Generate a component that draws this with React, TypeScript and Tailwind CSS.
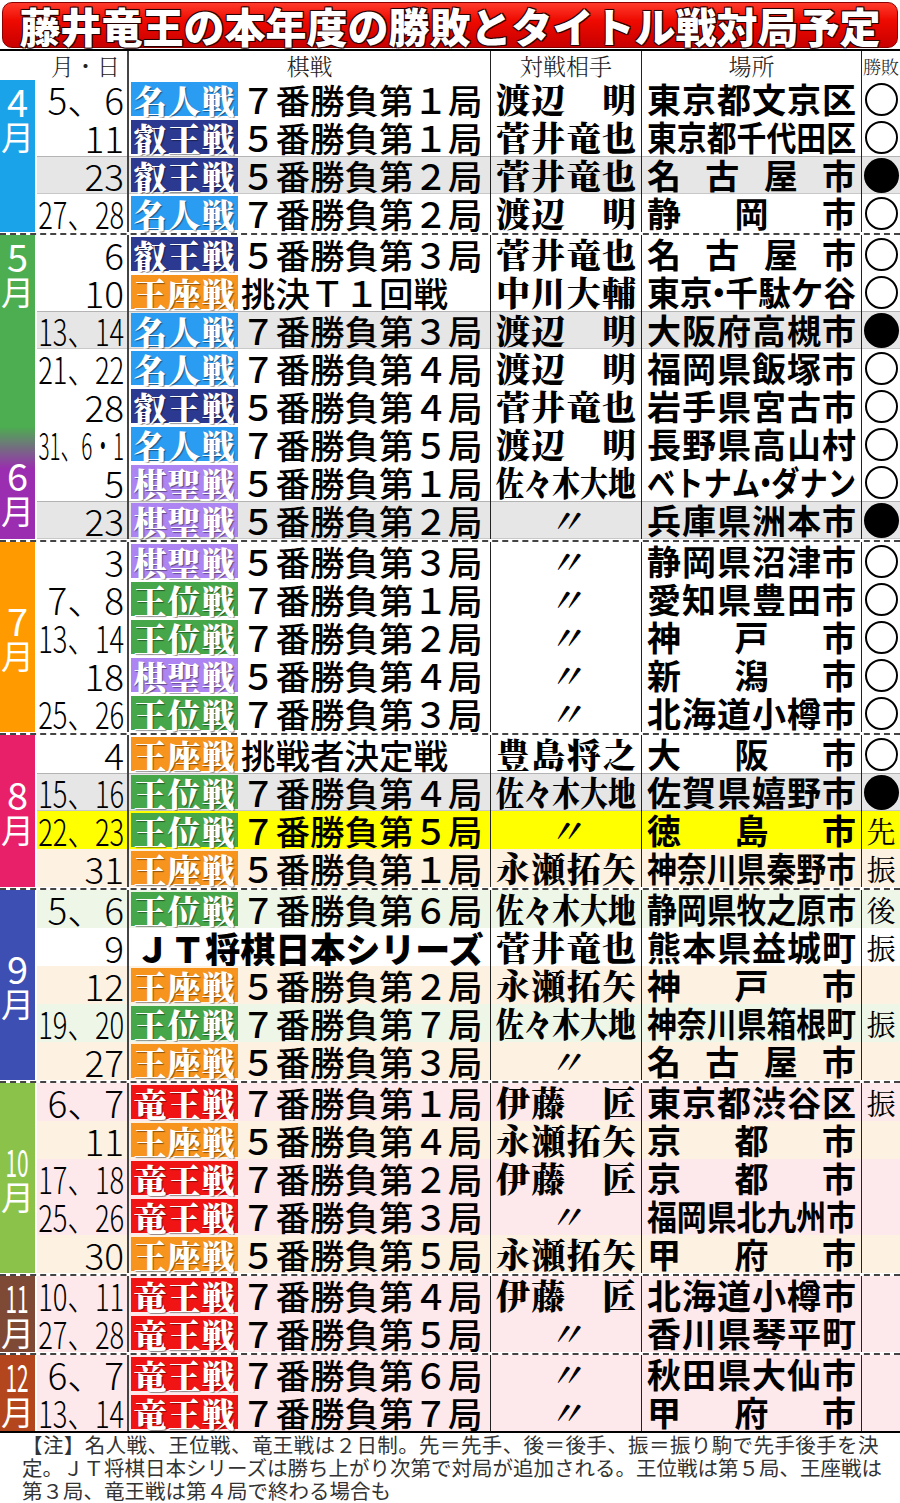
import type { ReactNode } from "react";

type Title = "meijin" | "eiou" | "ouza" | "kisei" | "oui" | "ryuou";
type Bg = "gray" | "yellow" | "cream" | "green" | "pink";

type Row = {
  d: string;
  t?: Title;
  m: string;
  o: string;
  p: string;
  r?: string;
  bg?: Bg;
};

const badges: Record<Title, { label: string; cls: string }> = {
  meijin: { label: "名人戦", cls: "bg-[#2a9cf2]" },
  eiou: { label: "叡王戦", cls: "bg-[#2b3990]" },
  ouza: { label: "王座戦", cls: "bg-[#f7941d]" },
  kisei: { label: "棋聖戦", cls: "bg-[#ad85f2]" },
  oui: { label: "王位戦", cls: "bg-[#46a64a]" },
  ryuou: { label: "竜王戦", cls: "bg-[#f01414]" },
};

const bgs: Record<Bg, string> = {
  gray: "bg-[#e6e6e6] shadow-[inset_0_1px_0_#b4b4b4,inset_0_-1px_0_#c8c8c8]",
  yellow: "bg-[#ffff00]",
  cream: "bg-[#fdf1e2]",
  green: "bg-[#eef6e8]",
  pink: "bg-[#fde9eb]",
};

const SERIF = "font-['Noto_Serif_CJK_JP','Noto_Sans_CJK_JP',serif]";

const groups: { block: string; labels: ReactNode; rows: Row[] }[] = [
  {
    block: "bg-[#1aa3e8] justify-start pt-[3px]",
    labels: <MonthLabel n="4" />,
    rows: [
      { d: "5、6", t: "meijin", m: "７番勝負第１局", o: "渡辺　明", p: "東京都文京区", r: "○" },
      { d: "11", t: "eiou", m: "５番勝負第１局", o: "菅井竜也", p: "東京都千代田区", r: "○" },
      { d: "23", t: "eiou", m: "５番勝負第２局", o: "菅井竜也", p: "名古屋市", r: "●", bg: "gray" },
      { d: "27、28", t: "meijin", m: "７番勝負第２局", o: "渡辺　明", p: "静岡市", r: "○" },
    ],
  },
  {
    block: "bg-[linear-gradient(180deg,#4cae50_63%,#9a2db0_77%)] justify-between pt-[3px] pb-[12px]",
    labels: (
      <>
        <MonthLabel n="5" />
        <MonthLabel n="6" />
      </>
    ),
    rows: [
      { d: "6", t: "eiou", m: "５番勝負第３局", o: "菅井竜也", p: "名古屋市", r: "○" },
      { d: "10", t: "ouza", m: "挑決Ｔ１回戦", o: "中川大輔", p: "東京・千駄ケ谷", r: "○" },
      { d: "13、14", t: "meijin", m: "７番勝負第３局", o: "渡辺　明", p: "大阪府高槻市", r: "●", bg: "gray" },
      { d: "21、22", t: "meijin", m: "７番勝負第４局", o: "渡辺　明", p: "福岡県飯塚市", r: "○" },
      { d: "28", t: "eiou", m: "５番勝負第４局", o: "菅井竜也", p: "岩手県宮古市", r: "○" },
      { d: "31、6・1", t: "meijin", m: "７番勝負第５局", o: "渡辺　明", p: "長野県高山村", r: "○" },
      { d: "5", t: "kisei", m: "５番勝負第１局", o: "佐々木大地", p: "ベトナム・ダナン", r: "○" },
      { d: "23", t: "kisei", m: "５番勝負第２局", o: "〃", p: "兵庫県洲本市", r: "●", bg: "gray" },
    ],
  },
  {
    block: "bg-[#ff9a00] justify-center",
    labels: <MonthLabel n="7" />,
    rows: [
      { d: "3", t: "kisei", m: "５番勝負第３局", o: "〃", p: "静岡県沼津市", r: "○" },
      { d: "7、8", t: "oui", m: "７番勝負第１局", o: "〃", p: "愛知県豊田市", r: "○" },
      { d: "13、14", t: "oui", m: "７番勝負第２局", o: "〃", p: "神戸市", r: "○" },
      { d: "18", t: "kisei", m: "５番勝負第４局", o: "〃", p: "新潟市", r: "○" },
      { d: "25、26", t: "oui", m: "７番勝負第３局", o: "〃", p: "北海道小樽市", r: "○" },
    ],
  },
  {
    block: "bg-[#e8206a] justify-center",
    labels: <MonthLabel n="8" />,
    rows: [
      { d: "4", t: "ouza", m: "挑戦者決定戦", o: "豊島将之", p: "大阪市", r: "○" },
      { d: "15、16", t: "oui", m: "７番勝負第４局", o: "佐々木大地", p: "佐賀県嬉野市", r: "●", bg: "gray" },
      { d: "22、23", t: "oui", m: "７番勝負第５局", o: "〃", p: "徳島市", r: "先", bg: "yellow" },
      { d: "31", t: "ouza", m: "５番勝負第１局", o: "永瀬拓矢", p: "神奈川県秦野市", r: "振", bg: "cream" },
    ],
  },
  {
    block: "bg-[#3d4fb2] justify-center",
    labels: <MonthLabel n="9" />,
    rows: [
      { d: "5、6", t: "oui", m: "７番勝負第６局", o: "佐々木大地", p: "静岡県牧之原市", r: "後", bg: "green" },
      { d: "9", m: "ＪＴ将棋日本シリーズ", o: "菅井竜也", p: "熊本県益城町", r: "振" },
      { d: "12", t: "ouza", m: "５番勝負第２局", o: "永瀬拓矢", p: "神戸市", bg: "cream" },
      { d: "19、20", t: "oui", m: "７番勝負第７局", o: "佐々木大地", p: "神奈川県箱根町", r: "振", bg: "green" },
      { d: "27", t: "ouza", m: "５番勝負第３局", o: "〃", p: "名古屋市", bg: "cream" },
    ],
  },
  {
    block: "bg-[#8bc34a] justify-center",
    labels: <MonthLabel n="10" />,
    rows: [
      { d: "6、7", t: "ryuou", m: "７番勝負第１局", o: "伊藤　匠", p: "東京都渋谷区", r: "振", bg: "pink" },
      { d: "11", t: "ouza", m: "５番勝負第４局", o: "永瀬拓矢", p: "京都市", bg: "cream" },
      { d: "17、18", t: "ryuou", m: "７番勝負第２局", o: "伊藤　匠", p: "京都市", bg: "pink" },
      { d: "25、26", t: "ryuou", m: "７番勝負第３局", o: "〃", p: "福岡県北九州市", bg: "pink" },
      { d: "30", t: "ouza", m: "５番勝負第５局", o: "永瀬拓矢", p: "甲府市", bg: "cream" },
    ],
  },
  {
    block: "bg-[#7e4a35] justify-center",
    labels: <MonthLabel n="11" />,
    rows: [
      { d: "10、11", t: "ryuou", m: "７番勝負第４局", o: "伊藤　匠", p: "北海道小樽市", bg: "pink" },
      { d: "27、28", t: "ryuou", m: "７番勝負第５局", o: "〃", p: "香川県琴平町", bg: "pink" },
    ],
  },
  {
    block: "bg-[#b3461c] justify-center",
    labels: <MonthLabel n="12" />,
    rows: [
      { d: "6、7", t: "ryuou", m: "７番勝負第６局", o: "〃", p: "秋田県大仙市", bg: "pink" },
      { d: "13、14", t: "ryuou", m: "７番勝負第７局", o: "〃", p: "甲府市", bg: "pink" },
    ],
  },
];

function MonthLabel({ n }: { n: string }) {
  return (
    <div className="flex flex-col items-center text-white leading-none">
      <span className={`text-[38px] leading-[36px] ${n.length > 1 ? "scale-x-[0.55]" : ""}`}>{n}</span>
      <span className="text-[33px] leading-[34px]">月</span>
    </div>
  );
}

// spreads the characters over the cell, squeezing when they don't fit
function Spread({ text, avail, size }: { text: string; avail: number; size: number }) {
  const chars = [...text];
  const natural = chars.reduce((w, c) => w + (c === "・" ? size * 0.4 : size), 0);
  const s = natural > avail ? avail / natural : 1;
  return (
    <div
      className="flex justify-between origin-left shrink-0"
      style={s < 1 ? { width: natural, transform: `scaleX(${s})` } : { width: avail }}
    >
      {chars.map((c, i) =>
        c === "・" ? (
          <span key={i} className="w-[0.4em] flex justify-center">
            ・
          </span>
        ) : (
          <span key={i}>{c}</span>
        )
      )}
    </div>
  );
}

function dateScale(d: string) {
  if (d.length >= 6) return "scale-x-[0.56]";
  if (d.length === 5) return "scale-x-[0.74]";
  return "";
}

function Result({ r }: { r?: string }) {
  if (r === "○") return <div className="w-[33px] h-[33px] rounded-full border-2 border-black" />;
  if (r === "●") return <div className="w-[35px] h-[35px] rounded-full bg-black" />;
  if (!r) return null;
  return <span className={`text-[29px] leading-none ${SERIF}`}>{r}</span>;
}

function TableRow({ row }: { row: Row }) {
  const b = row.t ? badges[row.t] : null;
  const ditto = row.o === "〃";
  return (
    <div className={`flex h-[38px] ${row.bg ? bgs[row.bg] : "bg-white"}`}>
      <div className="w-[92px] shrink-0 flex items-center justify-end pr-[3px] border-r-2 border-[#444]">
        <span className={`inline-block whitespace-nowrap origin-right text-[37px] font-extralight leading-none ${dateScale(row.d)}`}>
          {row.d}
        </span>
      </div>
      <div className="w-[361px] shrink-0 flex items-center px-[2px]">
        {b ? (
          <>
            <div
              className={`w-[107px] h-[34px] shrink-0 flex items-center justify-center text-white text-[33px] font-black leading-none tracking-[1px] [text-shadow:1px_1px_1px_rgba(0,0,0,0.45)] ${SERIF} ${b.cls}`}
            >
              {b.label}
            </div>
            <span className="ml-[3px] text-[34.5px] font-medium leading-none whitespace-nowrap">{row.m}</span>
          </>
        ) : (
          <span className="w-full text-center text-[35px] font-black leading-none whitespace-nowrap">{row.m}</span>
        )}
      </div>
      <div
        className={`w-[151px] shrink-0 flex items-center px-[5px] border-l border-[#222] text-[34px] font-black leading-none ${SERIF} ${
          ditto ? "justify-center" : "justify-start"
        }`}
      >
        {ditto ? <span className="italic">〃</span> : <Spread text={row.o} avail={140} size={34} />}
      </div>
      <div className="w-[220px] shrink-0 flex items-center px-[5px] border-l border-[#222] text-[34px] font-bold leading-none">
        <Spread text={row.p} avail={209} size={34} />
      </div>
      <div className="w-[39px] shrink-0 flex items-center justify-center border-l border-[#222]">
        <Result r={row.r} />
      </div>
    </div>
  );
}

export default function App() {
  return (
    <div className="w-[900px] bg-white text-black font-['Noto_Sans_CJK_JP','Noto_Sans',sans-serif]">
      {/* Title */}
      <div className="mx-[2px] mt-[2px] mb-px h-[46px] rounded-[10px] border border-[#8a0000] bg-[linear-gradient(180deg,#ff3b2b_0%,#ee0a00_40%,#c80000_100%)] flex items-center justify-center">
        <h1 className="text-[41px] font-black leading-[46px] text-white whitespace-nowrap [text-shadow:0_0_2px_#2a0000,1px_1px_0_#2a0000,-1px_-1px_0_#2a0000,1px_-1px_0_#2a0000,-1px_1px_0_#2a0000]">
          藤井竜王の本年度の勝敗とタイトル戦対局予定
        </h1>
      </div>

      {/* Header */}
      <div className={`flex h-[31px] border-t-2 border-black text-[23px] font-light leading-none text-[#222] ${SERIF}`}>
        <div className="w-[129px] shrink-0 flex items-center justify-end pr-[7px] border-r-2 border-[#444]">月・日</div>
        <div className="w-[361px] shrink-0 flex items-center justify-center">棋戦</div>
        <div className="w-[151px] shrink-0 flex items-center justify-center border-l border-[#222]">対戦相手</div>
        <div className="w-[220px] shrink-0 flex items-center justify-center border-l border-[#222]">場所</div>
        <div className="w-[39px] shrink-0 flex items-center justify-center border-l border-[#222] text-[18px]">勝敗</div>
      </div>

      {/* Body */}
      <div className="border-b-2 border-black">
        {groups.map((g, gi) => (
          <div key={gi} className={`flex ${gi > 0 ? "mt-px border-t-2 border-dashed border-[#444]" : ""}`}>
            <div className="w-[37px] shrink-0 flex">
              <div className={`w-[35px] flex flex-col items-center ${g.block}`}>{g.labels}</div>
            </div>
            <div className="w-[863px] flex flex-col">
              {g.rows.map((row, ri) => (
                <TableRow key={ri} row={row} />
              ))}
            </div>
          </div>
        ))}
      </div>

      {/* Note */}
      <div className="px-[22px] text-[20.5px] leading-[23px] text-[#333] whitespace-nowrap">
        <div className="tracking-[0.4px]">【注】名人戦、王位戦、竜王戦は２日制。先＝先手、後＝後手、振＝振り駒で先手後手を決</div>
        <div>定。ＪＴ将棋日本シリーズは勝ち上がり次第で対局が追加される。王位戦は第５局、王座戦は</div>
        <div>第３局、竜王戦は第４局で終わる場合も</div>
      </div>
    </div>
  );
}
